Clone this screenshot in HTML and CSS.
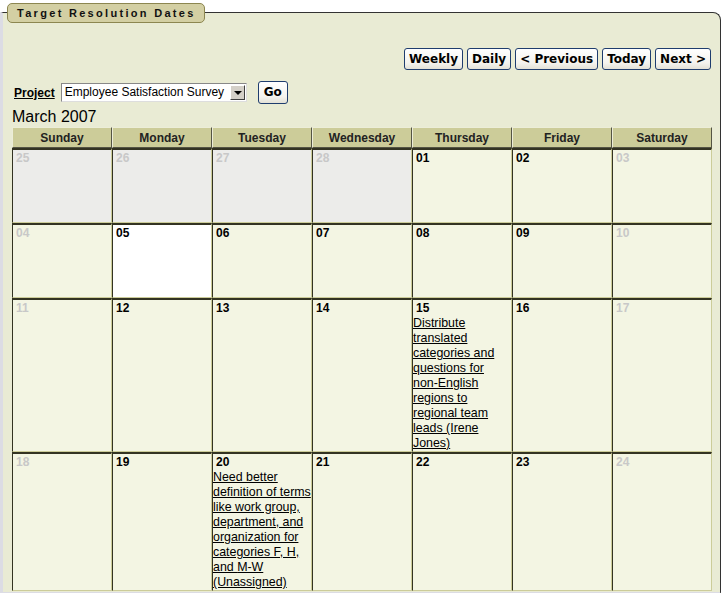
FILE: index.html
```html
<!DOCTYPE html>
<html lang="en">
<head>
	<meta charset="UTF-8">
	<title>Target Resolution Dates</title>
	<link rel="stylesheet" href="styles.css">
</head>
<body>
	<div class="region">
		<div class="region-title">Target Resolution Dates</div>
		<div class="region-body">
			<div class="toolbar">
				<a href="javascript:;" class="btn">Weekly</a>
				<a href="javascript:;" class="btn">Daily</a>
				<a href="javascript:;" class="btn">&lt; Previous</a>
				<a href="javascript:;" class="btn">Today</a>
				<a href="javascript:;" class="btn">Next &gt;</a>
			</div>

			<div class="filter">
				<a href="javascript:;" class="filter-label">Project</a>
				<div class="select">
					<span class="select-text">Employee Satisfaction Survey</span>
					<span class="select-arrow"></span>
				</div>
				<a href="javascript:;" class="btn btn-go">Go</a>
			</div>

			<div class="month">March 2007</div>

			<table class="cal">
				<thead>
					<tr>
						<th>Sunday</th>
						<th>Monday</th>
						<th>Tuesday</th>
						<th>Wednesday</th>
						<th>Thursday</th>
						<th>Friday</th>
						<th>Saturday</th>
					</tr>
				</thead>
				<tbody>
					<tr class="week">
						<td class="other"><div class="day">25</div></td>
						<td class="other"><div class="day">26</div></td>
						<td class="other"><div class="day">27</div></td>
						<td class="other"><div class="day">28</div></td>
						<td><div class="day">01</div></td>
						<td><div class="day">02</div></td>
						<td class="weekend"><div class="day">03</div></td>
					</tr>
					<tr class="week">
						<td class="weekend"><div class="day">04</div></td>
						<td class="today"><div class="day">05</div></td>
						<td><div class="day">06</div></td>
						<td><div class="day">07</div></td>
						<td><div class="day">08</div></td>
						<td><div class="day">09</div></td>
						<td class="weekend"><div class="day">10</div></td>
					</tr>
					<tr class="week">
						<td class="weekend"><div class="day">11</div></td>
						<td><div class="day">12</div></td>
						<td><div class="day">13</div></td>
						<td><div class="day">14</div></td>
						<td>
							<div class="day">15</div>
							<a href="javascript:;" class="event">Distribute translated categories and questions for <span class="nobr">non-English</span> regions to regional team leads (Irene Jones)</a>
						</td>
						<td><div class="day">16</div></td>
						<td class="weekend"><div class="day">17</div></td>
					</tr>
					<tr class="week">
						<td class="weekend"><div class="day">18</div></td>
						<td><div class="day">19</div></td>
						<td>
							<div class="day">20</div>
							<a href="javascript:;" class="event">Need better definition of terms like work group, department, and organization for categories F, H, and <span class="nobr">M-W</span> (Unassigned)</a>
						</td>
						<td><div class="day">21</div></td>
						<td><div class="day">22</div></td>
						<td><div class="day">23</div></td>
						<td class="weekend"><div class="day">24</div></td>
					</tr>
				</tbody>
			</table>
		</div>
	</div>
</body>
</html>
```

FILE: styles.css
```css
body{
	margin: 0;
	background: #fff;
	font-family: "Liberation Sans", Arial, sans-serif;
	font-size: 12px;
	color: #000;
}

.region{
	position: relative;
	margin-top: 12px;
	width: 717px;
	background: #e9ebd4;
	border-top: 1px solid #333;
	border-right: 1px solid #333;
	border-left: 3px solid #dcdce4;
	border-bottom: 3px solid #dcdce4;
	border-top-right-radius: 8px;
}

/* tab sitting over the top border */
.region-title{
	position: absolute;
	top: -10px;
	left: 4px;
	height: 18px;
	padding: 0 8px 0 9px;
	background: #d3cfa3;
	border: 1px solid #8c8650;
	border-radius: 5px;
	font-size: 11px;
	font-weight: bold;
	line-height: 19px;
	letter-spacing: 2.3px;
	color: #111;
}

.region-body{
	padding: 35px 9px 1px 9px;
}

.toolbar{
	display: flex;
	justify-content: flex-end;
	gap: 4px;
}

.btn{
	display: inline-block;
	height: 20px;
	padding: 0 4px;
	border: 1px solid #1f3d6e;
	border-radius: 3px;
	background: linear-gradient(#ffffff, #f4f3ee 70%, #e3e1d6);
	font-family: "DejaVu Sans", Verdana, sans-serif;
	font-size: 12px;
	font-weight: bold;
	line-height: 20px;
	color: #000;
	text-decoration: none;
}

.filter{
	display: flex;
	align-items: center;
	margin-top: 11px;
	padding-left: 2px;
}

.filter-label{
	font-weight: bold;
	color: #000;
	margin-right: 6px;
}

.select{
	position: relative;
	width: 184px;
	height: 17px;
	border: 1px solid;
	border-color: #888 #ddd #ddd #888;
	background: #fff;
}

.select-text{
	display: block;
	padding-left: 3px;
	line-height: 17px;
	white-space: nowrap;
}

.select-arrow{
	position: absolute;
	top: 1px;
	right: 1px;
	width: 13px;
	height: 13px;
	background: #d4d0c8;
	border: 1px solid;
	border-color: #fff #404040 #404040 #fff;
}

.select-arrow::after{
	content: "";
	position: absolute;
	left: 3px;
	top: 5px;
	border-left: 4px solid transparent;
	border-right: 4px solid transparent;
	border-top: 4px solid #000;
}

.btn-go{
	margin-left: 11px;
	padding: 0 5px;
	height: 21px;
	line-height: 21px;
}

.month{
	margin-top: 3px;
	font-size: 16px;
	line-height: 19px;
	height: 20px;
}

.cal{
	width: 700px;
	table-layout: fixed;
	border-collapse: separate;
	border-spacing: 0;
}

.cal th{
	height: 19px;
	padding: 0;
	background: #cccc99;
	border: 1px solid;
	border-color: #ecedd8 #555544 #555544 #ecedd8;
	font-size: 12px;
	font-weight: bold;
	color: #222;
}

.cal .week{
	height: 75px;
}

.cal td{
	vertical-align: top;
	padding: 1px 0 0 0;
	background: #f3f5e3;
	border-top: 2px solid #333322;
	border-left: 1px solid #333322;
	border-right: 1px solid #cccc99;
	border-bottom: 1px solid #cccc99;
	line-height: 15px;
}

.cal td.other{
	background: #ececea;
}

.cal td.today{
	background: #fff;
}

.day{
	padding-left: 3px;
	font-weight: bold;
}

.other .day,
.weekend .day{
	color: #c8c8c8;
}

.event{
	display: block;
	font-size: 12.4px;
	color: #000;
}

.nobr{
	white-space: nowrap;
}
```
